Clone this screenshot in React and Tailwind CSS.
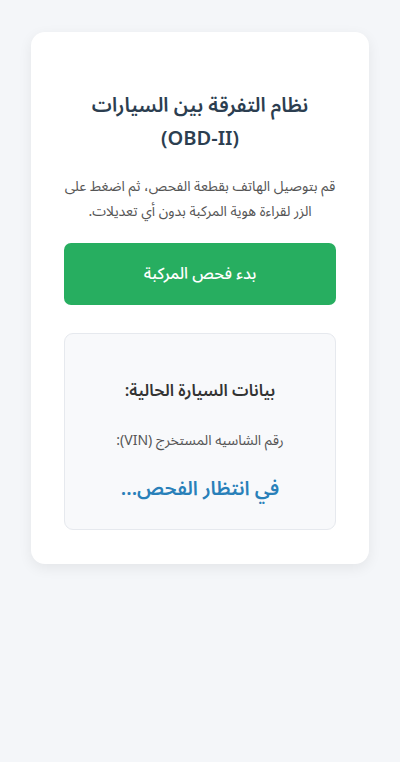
import React from "react";

export default function App() {
  return (
    <div
      dir="rtl"
      className="min-h-[762px] bg-[#f4f6f9] pt-[32px] px-[31px]"
      style={{ fontFamily: '"Noto Sans Arabic", "Noto Sans", "DejaVu Sans", sans-serif' }}
    >
      <div className="bg-white rounded-[14px] shadow-[0_4px_14px_rgba(0,0,0,0.07)] px-[33px] pt-[58px] pb-[34px] text-center">
        <h1 className="text-[20px] leading-[33px] font-semibold text-[#2c3e50]">
          نظام التفرقة بين السيارات (OBD-II)
        </h1>
        <p className="mt-[18px] text-[14px] leading-[25px] text-[#555]">
          قم بتوصيل الهاتف بقطعة الفحص، ثم اضغط على الزر لقراءة هوية المركبة بدون أي تعديلات.
        </p>
        <button className="mt-[19px] w-full h-[62px] rounded-[7px] bg-[#27ae60] text-white text-[16px] font-medium">
          بدء فحص المركبة
        </button>
        <div className="mt-[28px] rounded-[9px] border border-[#e6e9ee] bg-[#f8f9fb] pt-[43px] pb-[25px]">
          <h3 className="text-[16.5px] leading-[27px] font-semibold text-[#333]">بيانات السيارة الحالية:</h3>
          <p className="mt-[26px] text-[14px] leading-[21px] text-[#555]">رقم الشاسيه المستخرج (VIN):</p>
          <p className="mt-[23px] text-[19.5px] leading-[30px] font-semibold text-[#2980b9]">في انتظار الفحص...</p>
        </div>
      </div>
    </div>
  );
}
